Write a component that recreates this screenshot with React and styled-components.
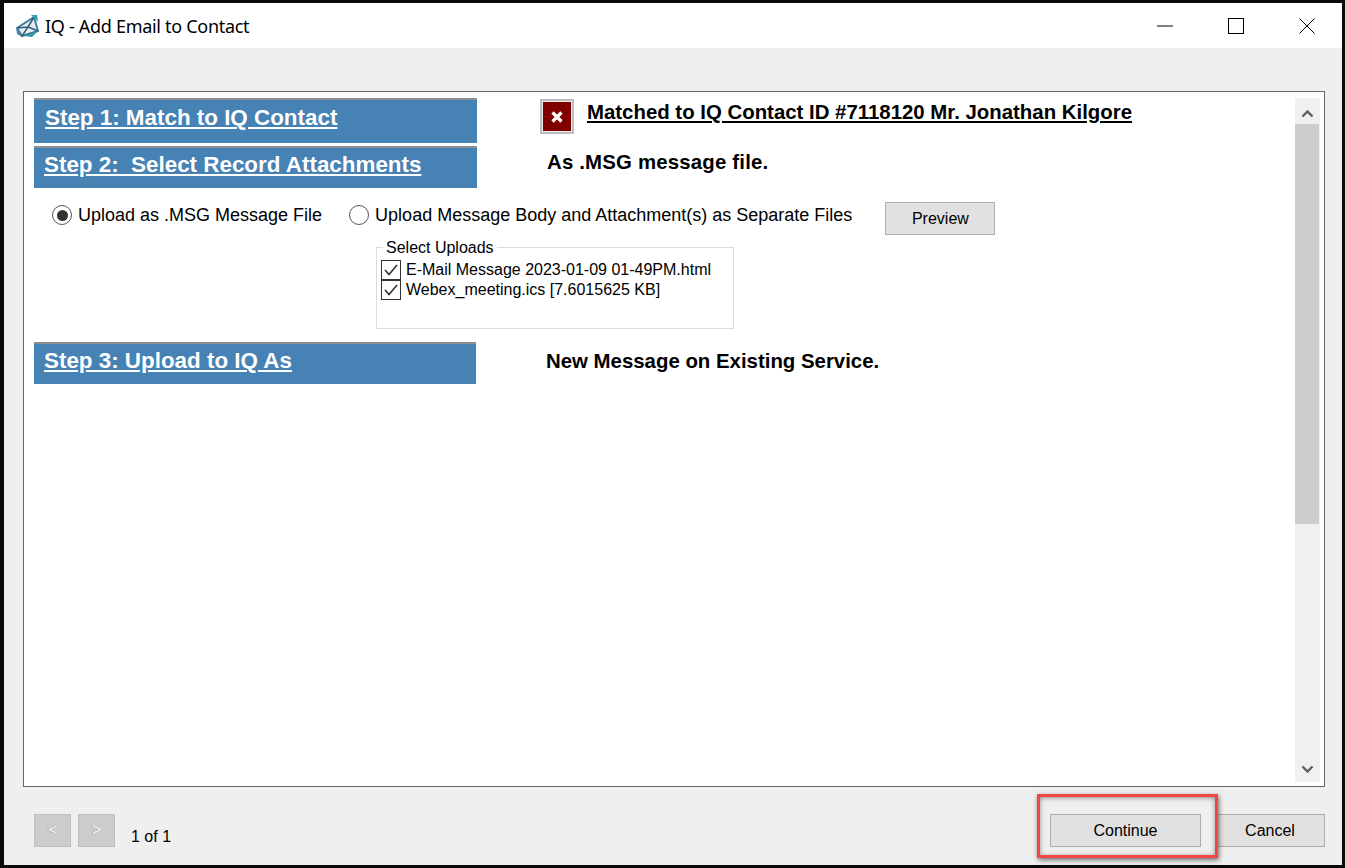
import React from "react";
import styled, { createGlobalStyle } from "styled-components";

const Global = createGlobalStyle`
  html, body { margin: 0; padding: 0; background: #000; }
  * { box-sizing: border-box; }
  #root { width: 1345px; height: 868px; overflow: hidden; }
`;

const Frame = styled.div`
  width: 1345px; height: 868px;
  padding: 3px 3px 3px 4px;
  background: #0a0a0a;
  font-family: "Liberation Sans", Arial, sans-serif;
  color: #000;
`;
const Win = styled.div`
  position: relative;
  width: 100%; height: 100%;
  display: flex; flex-direction: column;
  background: #efefef;
`;
const TitleBar = styled.div`
  height: 45px; flex: none;
  background: #fff;
  display: flex; align-items: center;
  padding-left: 11px;
`;
const Title = styled.div`
  margin-left: 5px;
  font: 18px/24px "Noto Sans", "Open Sans", sans-serif;
  letter-spacing: -0.3px;
  flex: 1;
`;
const WinBtn = styled.div`
  width: 71px; height: 45px;
  display: flex; align-items: center; justify-content: center;
`;
const Body = styled.div`
  flex: 1; min-height: 0;
  padding: 43px 17px 0 19px;
  display: flex; flex-direction: column;
`;
const Panel = styled.div`
  height: 696px; flex: none;
  background: #fff;
  border: 1px solid #666;
  display: flex;
  padding: 6px 4px 4px 10px;
`;
const Content = styled.div`
  flex: 1; min-width: 0;
  display: flex; flex-direction: column;
`;
const StepRow = styled.div`
  display: flex; align-items: flex-start;
  margin-top: ${p => p.$top || 0}px;
`;
const StepHead = styled.div`
  width: ${p => p.$w || 443}px; height: ${p => p.$h || 45}px;
  flex: none;
  background: #4682b4;
  border-top: 2px solid #8a8f94;
  padding: ${p => p.$pt || 3}px 0 0 ${p => p.$pl || 11}px;
  color: #fff;
  font-size: 22.4px; line-height: 30px; font-weight: 700;
  text-decoration: underline;
  white-space: pre;
`;
const RemoveBtn = styled.div`
  width: 34px; height: 35px; flex: none;
  margin: 1px 0 0 63px;
  background: #eee;
  border: 2px solid #bdbdbd;
  padding: 1px;
  display: flex;
`;
const RemoveFace = styled.div`
  flex: 1; background: #800000;
  display: flex; align-items: center; justify-content: center;
`;
const Matched = styled.div`
  margin: 1px 0 0 13px;
  font-size: 20.4px; line-height: 26px; font-weight: 700;
  text-decoration: underline; white-space: nowrap;
`;
const Summary = styled.div`
  margin: ${p => p.$mt}px 0 0 ${p => p.$ml}px;
  font-size: 20.4px; line-height: 26px; font-weight: 700; white-space: nowrap;
  letter-spacing: ${p => p.$ls || 0}px;
`;
const OptionRow = styled.div`
  display: flex; align-items: flex-start;
  margin: 14px 0 0 18px;
`;
const Radio = styled.label`
  display: flex; align-items: center;
  height: 26px;
  margin-left: ${p => p.$ml || 0}px;
  font-size: 18px; white-space: nowrap;
`;
const RadioDot = styled.span`
  width: 20px; height: 20px; border-radius: 50%;
  border: 1.5px solid #555;
  margin-right: 6px; flex: none;
  display: flex; align-items: center; justify-content: center;
  &::after {
    content: "";
    width: 11px; height: 11px; border-radius: 50%;
    background: ${p => (p.$on ? "#333" : "transparent")};
  }
`;
const PreviewBtn = styled.div`
  width: 110px; height: 33px;
  margin-left: 33px; flex: none;
  background: #e1e1e1;
  border: 1px solid #adadad;
  font-size: 16px; line-height: 31px;
  text-align: center;
`;
const Fieldset = styled.fieldset`
  width: 358px; height: 90px;
  margin: 4px 0 0 342px; padding: 0 0 0 4px;
  border: 1px solid #dcdcdc;
  display: flex; flex-direction: column;
`;
const Legend = styled.legend`
  padding: 0 3px; margin-left: 2px;
  font-size: 16px; line-height: 16px;
  position: relative; top: 1px;
`;
const CheckRow = styled.label`
  display: flex; align-items: center;
  height: 20px; margin-top: ${p => p.$mt || 0}px;
  font-size: 16px; white-space: nowrap;
`;
const CheckBox = styled.span`
  width: 20px; height: 20px; flex: none;
  border: 1px solid #333;
  margin-right: 5px;
  display: flex; align-items: center; justify-content: center;
`;
const ScrollBar = styled.div`
  width: 25px; flex: none;
  background: #f0f0f0;
  display: flex; flex-direction: column;
`;
const Arrow = styled.div`
  height: 26px; flex: none;
  padding-top: ${p => p.$pt || 0}px;
  display: flex; align-items: center; justify-content: center;
`;
const Thumb = styled.div`
  height: 400px; flex: none;
  width: 24px;
  background: #cdcdcd;
`;
const Spacer = styled.div`flex: 1;`;
const Footer = styled.div`
  display: flex; align-items: flex-start;
  padding: 27px 0 0 11px;
`;
const NavBtn = styled.div`
  width: 37px; height: 33px; margin-right: 7px;
  background: #cccccc;
  border: 1px solid #bfbfbf;
  color: #f4f4f4;
  font-size: 16px; line-height: 30px; text-align: center;
  text-shadow: -1px 0 0 #999;
`;
const Pager = styled.div`
  margin: 13px 0 0 9px;
  font-size: 16px; line-height: 20px; flex: 1;
`;
const ActionBtn = styled.div`
  width: ${p => p.$w}px; height: 33px; flex: none;
  margin-left: ${p => p.$ml || 0}px;
  background: #e1e1e1;
  border: 1px solid #adadad;
  font-size: 16px; line-height: 31px; text-align: center;
`;
const Callout = styled.div`
  position: absolute;
  left: 1033px; top: 791px;
  width: 181px; height: 64px;
  border: 3px solid #f44545;
  box-shadow: 1px 2px 5px rgba(0,0,0,.55), inset 0 1px 5px rgba(0,0,0,.4);
  pointer-events: none;
`;

const Logo = () => (
  <svg width="25" height="24" viewBox="0 0 25 24">
    <path d="M2 14 L19 3 L23 17 L7 22 Z" fill="#e4edf2" stroke="#3f7ba0" strokeWidth="2" />
    <path d="M2 14 L13 13 L19 3" fill="none" stroke="#2c5c78" strokeWidth="1.6" />
    <path d="M13 13 L23 17" stroke="#2c5c78" strokeWidth="1.4" />
    <path d="M13 13 L7 22" stroke="#2c5c78" strokeWidth="1.4" />
    <path d="M16 1 L22 1 L23 8 Z" fill="#2aa0a8" />
    <path d="M1 14 L7 23 L2 20 Z" fill="#4f86a8" />
    <path d="M9 22 L23 17 L17 23 Z" fill="#2f9aa0" />
  </svg>
);

const Chevron = ({ up }) => (
  <svg width="13" height="9" viewBox="0 0 13 9">
    <path d={up ? "M1.5 7.5 L6.5 2.5 L11.5 7.5" : "M1.5 1.5 L6.5 6.5 L11.5 1.5"} fill="none" stroke="#606060" strokeWidth="2.4" />
  </svg>
);

const Check = () => (
  <svg width="16" height="14" viewBox="0 0 16 14">
    <path d="M2 7 L6 11.5 L14 2" fill="none" stroke="#333" strokeWidth="1.6" />
  </svg>
);

export default function App() {
  return (
    <>
      <Global />
      <Frame>
        <Win>
          <TitleBar>
            <Logo />
            <Title>IQ - Add Email to Contact</Title>
            <WinBtn>
              <svg width="16" height="2" viewBox="0 0 16 2"><path d="M0 1H16" stroke="#000" strokeWidth="1" /></svg>
            </WinBtn>
            <WinBtn>
              <svg width="16" height="16" viewBox="0 0 16 16"><rect x=".5" y=".5" width="15" height="15" fill="none" stroke="#000" /></svg>
            </WinBtn>
            <WinBtn>
              <svg width="16" height="16" viewBox="0 0 16 16"><path d="M.5 .5L15.5 15.5M15.5 .5L.5 15.5" stroke="#000" /></svg>
            </WinBtn>
          </TitleBar>
          <Body>
            <Panel>
              <Content>
                <StepRow>
                  <StepHead>Step 1: Match to IQ Contact</StepHead>
                  <RemoveBtn>
                    <RemoveFace>
                      <svg width="16" height="16" viewBox="0 0 16 16"><path d="M3.5 3.5L12.5 12.5M12.5 3.5L3.5 12.5" stroke="#fff" strokeWidth="3.2" /></svg>
                    </RemoveFace>
                  </RemoveBtn>
                  <Matched>Matched to IQ Contact ID #7118120 Mr. Jonathan Kilgore</Matched>
                </StepRow>
                <StepRow $top={3}>
                  <StepHead $h={42} $pt={2} $pl={10}>{"Step 2:  Select Record Attachments"}</StepHead>
                  <Summary $mt={3} $ml={70} $ls={0.18}>As .MSG message file.</Summary>
                </StepRow>
                <OptionRow>
                  <Radio>
                    <RadioDot $on />
                    Upload as .MSG Message File
                  </Radio>
                  <Radio $ml={27}>
                    <RadioDot />
                    Upload Message Body and Attachment(s) as Separate Files
                  </Radio>
                  <PreviewBtn>Preview</PreviewBtn>
                </OptionRow>
                <Fieldset>
                  <Legend>Select Uploads</Legend>
                  <CheckRow $mt={5}><CheckBox><Check /></CheckBox>E-Mail Message 2023-01-09 01-49PM.html</CheckRow>
                  <CheckRow><CheckBox><Check /></CheckBox>Webex_meeting.ics [7.6015625 KB]</CheckRow>
                </Fieldset>
                <StepRow $top={13}>
                  <StepHead $w={442} $h={42} $pt={2} $pl={10}>Step 3: Upload to IQ As</StepHead>
                  <Summary $mt={6} $ml={70}>New Message on Existing Service.</Summary>
                </StepRow>
              </Content>
              <ScrollBar>
                <Arrow $pt={4}><Chevron up /></Arrow>
                <Thumb />
                <Spacer />
                <Arrow><Chevron /></Arrow>
              </ScrollBar>
            </Panel>
            <Footer>
              <NavBtn>&lt;</NavBtn>
              <NavBtn>&gt;</NavBtn>
              <Pager>1 of 1</Pager>
              <ActionBtn $w={151}>Continue</ActionBtn>
              <ActionBtn $w={110} $ml={14}>Cancel</ActionBtn>
            </Footer>
          </Body>
          <Callout />
        </Win>
      </Frame>
    </>
  );
}
